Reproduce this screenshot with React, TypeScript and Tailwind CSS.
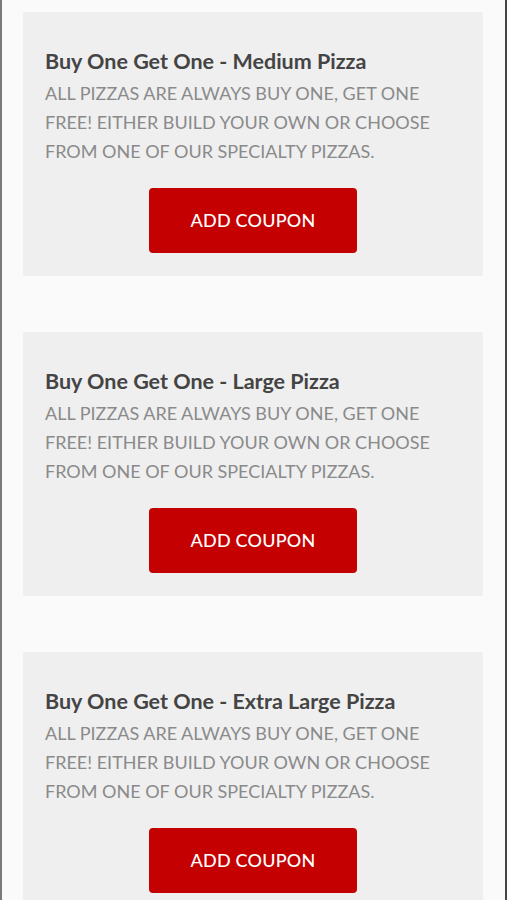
const coupons = [
  { title: "Buy One Get One - Medium Pizza" },
  { title: "Buy One Get One - Large Pizza" },
  { title: "Buy One Get One - Extra Large Pizza" },
];

const desc = "ALL PIZZAS ARE ALWAYS BUY ONE, GET ONE FREE! EITHER BUILD YOUR OWN OR CHOOSE FROM ONE OF OUR SPECIALTY PIZZAS.";

export default function App() {
  return (
    <div
      className="w-[507px] h-[900px] overflow-hidden bg-[#fafafa] border-l-2 border-r-2 border-l-[#7a7a7a] border-r-[#444]"
      style={{ fontFamily: "Lato, 'Open Sans', sans-serif" }}
    >
      <div className="flex flex-col gap-[56px] pt-[12px] pl-[21px] pr-[22px]">
        {coupons.map((c) => (
          <div key={c.title} className="bg-[#efefef] rounded-[2px] h-[264px] shrink-0 px-[22px] pt-[36px]">
            <h3 className="text-[21.5px] leading-[26px] font-bold text-[#444]">{c.title}</h3>
            <p className="mt-[5px] text-[18px] leading-[29px] text-[#8a8a8a] pr-[8px]">{desc}</p>
            <div className="flex justify-center mt-[22px]">
              <button className="w-[208px] h-[65px] rounded-[4px] bg-[#c40000] text-white text-[18px] font-medium tracking-[0.2px]">
                ADD COUPON
              </button>
            </div>
          </div>
        ))}
      </div>
    </div>
  );
}
